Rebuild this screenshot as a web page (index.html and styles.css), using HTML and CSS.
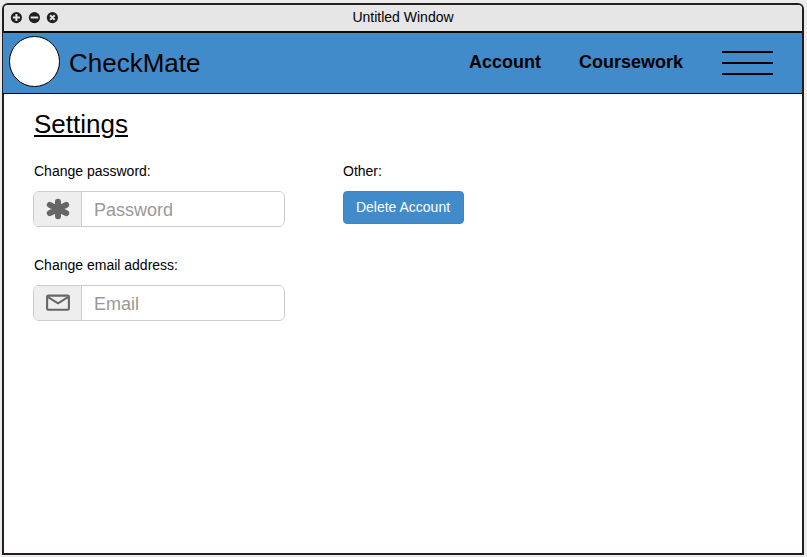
FILE: index.html
```html
<!DOCTYPE html>
<html lang="en">
<head>
<meta charset="utf-8">
<title>CheckMate</title>
<link rel="stylesheet" href="styles.css">
</head>
<body>
<div class="window">
  <div class="titlebar">
    <svg class="controls" width="50" height="14" viewBox="0 0 50 14">
      <g fill="#231f20"><circle cx="7.4" cy="6.6" r="5.6"/><circle cx="25.4" cy="6.6" r="5.6"/><circle cx="43.4" cy="6.6" r="5.6"/></g>
      <g stroke="#e6e6e6" stroke-width="2"><path d="M3.9 6.6h7M7.4 3.1v7M21.6 6.6h7.6M41.1 4.3l4.6 4.6M45.7 4.3l-4.6 4.6"/></g>
    </svg>
    <span class="title">Untitled Window</span>
  </div>
  <header class="header">
    <div class="logo"></div>
    <div class="brand">CheckMate</div>
    <nav class="nav">
      <a>Account</a>
      <a>Coursework</a>
      <div class="menu"><i></i><i></i><i></i></div>
    </nav>
  </header>
  <main class="main">
    <h1>Settings</h1>
    <div class="columns">
      <section class="fields">
        <label>Change password:</label>
        <div class="input-group">
          <span class="addon">
            <svg width="24" height="22" viewBox="0 0 24 22"><path d="M12 3.8v14.4M3.8 6.8l16.4 8.4M3.8 15.2l16.4-8.4" stroke="#666" stroke-width="6" stroke-linecap="round"/></svg>
          </span>
          <input type="password" placeholder="Password">
        </div>
        <label>Change email address:</label>
        <div class="input-group">
          <span class="addon">
            <svg width="24" height="22" viewBox="0 0 24 22" fill="none" stroke="#666" stroke-width="2.1"><rect x="1.1" y="3.6" width="21.8" height="14.2" rx="1.2"/><path d="M2 5.2l10 6.1 10-6.1"/></svg>
          </span>
          <input type="email" placeholder="Email">
        </div>
      </section>
      <section>
        <label>Other:</label>
        <button>Delete Account</button>
      </section>
    </div>
  </main>
</div>
</body>
</html>
```
FILE: styles.css
```css
* {
  box-sizing: border-box;
}

body {
  margin: 0;
  padding: 3px 3px 2px 2px;
  height: 557px;
  background: #ebebeb;
  color: #000;
  font-family: "Liberation Sans", Arial, sans-serif;
}

.window {
  width: 802px;
  height: 552px;
  border: 2px solid #231f20;
  border-radius: 6px 6px 0 0;
  background: #fff;
}

.titlebar {
  display: grid;
  grid-template-columns: 60px 1fr 65px;
  align-items: center;
  height: 28px;
  padding-left: 5px;
  border-bottom: 2px solid #0c0b0c;
  border-radius: 4px 4px 0 0;
  background: #e6e6e6;
}

.controls {
  display: block;
}

.title {
  font-size: 14px;
  line-height: 16px;
  text-align: center;
  margin-top: -2px;
}

.header {
  display: flex;
  align-items: center;
  height: 61px;
  margin-left: -1px;
  padding: 0 29px 0 6px;
  border-bottom: 1px solid #000;
  background: #428bca;
}

.logo {
  width: 51px;
  height: 51px;
  margin-top: -3px;
  border: 1px solid #000;
  border-radius: 50%;
  background: #fff;
}

.brand {
  margin-left: 9px;
  font-size: 26px;
  line-height: 30px;
}

.nav {
  display: flex;
  align-items: center;
  gap: 38px;
  margin-left: auto;
  font-size: 18px;
  font-weight: bold;
  line-height: 20px;
}

.nav a {
  margin-top: -2px;
}

.menu {
  display: grid;
  gap: 9px;
  width: 51px;
  margin-left: 1px;
}

.menu i {
  height: 2px;
  background: #000;
}

.main {
  padding: 15px 0 0 30px;
}

h1 {
  margin: 0;
  font-size: 26px;
  font-weight: normal;
  line-height: 30px;
  text-decoration: underline;
  text-decoration-thickness: 2px;
  text-underline-offset: 2px;
}

.columns {
  display: flex;
  padding-top: 24px;
}

.fields {
  width: 309px;
}

label {
  display: block;
  margin-bottom: 12px;
  font-size: 14px;
  line-height: 16px;
}

.input-group {
  display: flex;
  width: 252px;
  height: 36px;
  margin: 0 0 30px -1px;
  overflow: hidden;
  border: 1px solid #ccc;
  border-radius: 6px;
}

.addon {
  display: flex;
  align-items: center;
  justify-content: center;
  width: 48px;
  border-right: 1px solid #ccc;
  background: #eee;
}

input {
  flex: 1;
  min-width: 0;
  padding: 2px 12px 0;
  border: 0;
  outline: 0;
  font: 18px "Liberation Sans", Arial, sans-serif;
}

input::placeholder {
  color: #999;
  opacity: 1;
}

button {
  display: block;
  width: 121px;
  height: 33px;
  padding: 0 1px 2px 0;
  border: 1px solid #3d85c6;
  border-radius: 4px;
  background: #428bca;
  color: #fff;
  font: 14px "Liberation Sans", Arial, sans-serif;
}
```
